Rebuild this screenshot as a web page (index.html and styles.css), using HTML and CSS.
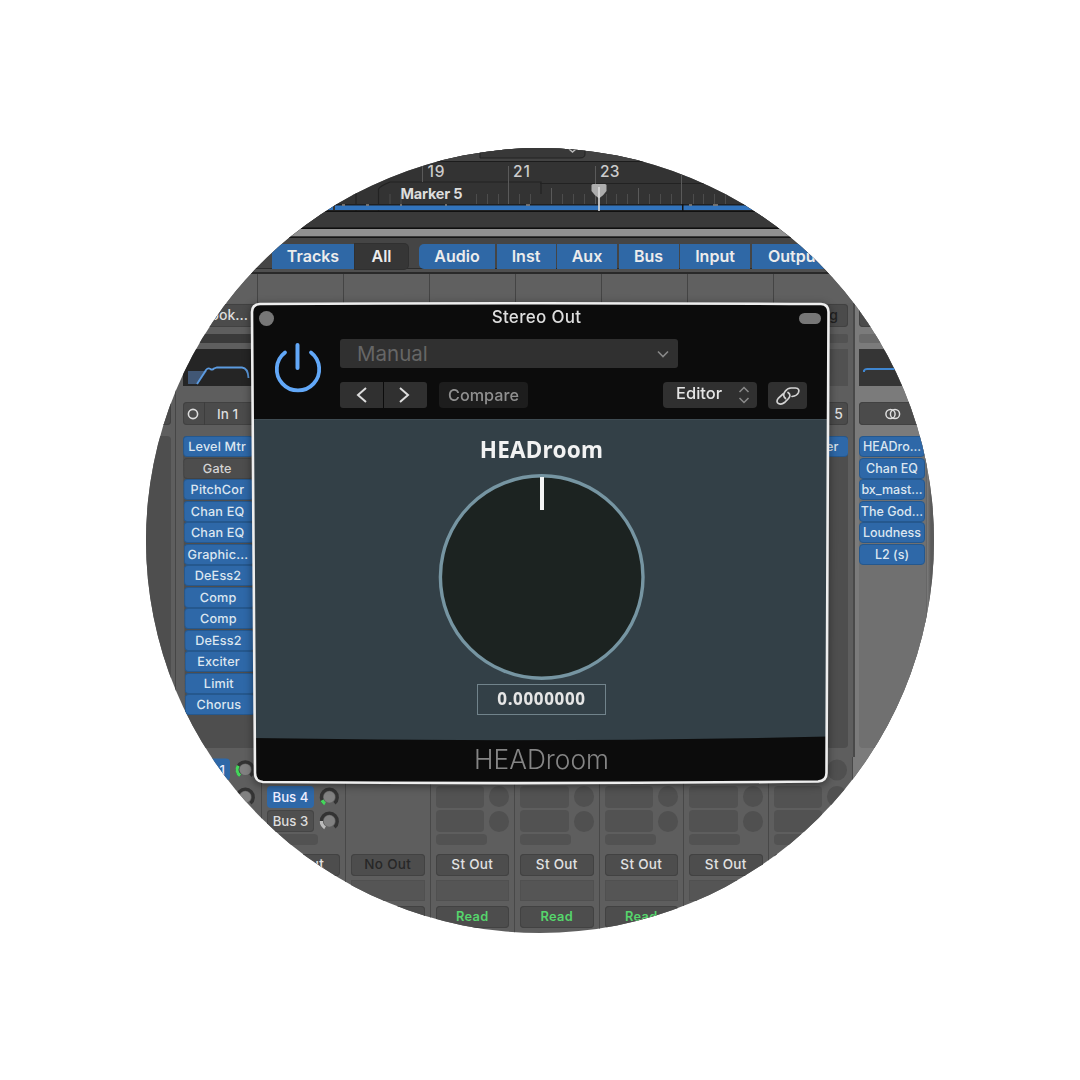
FILE: index.html
```html
<!DOCTYPE html>
<html lang="en">
<head>
<meta charset="utf-8">
<title>HEADroom</title>
<link rel="stylesheet" href="styles.css">
</head>
<body>
<main class="lens">
  <svg class="ruler" viewBox="146 148 788 90">
    <rect x="146" y="148" width="788" height="90" fill="#333"/>
    <path d="M146 148H934V161H146z" fill="#434343"/>
    <path d="M480 140H585V154Q585 158 580 158H480z" fill="#383838" stroke="#222"/>
    <path d="M569 149l3.500 3 3.500-3" fill="none" stroke="#bbb" stroke-width="1.500"/>
    <path d="M146 161.500H934" stroke="#1c1c1c"/>
    <path d="M540 183.500H934M356 190V213M378.500 213V189Q380 186 390 182H541V194" fill="none" stroke="#222" stroke-width="1.200"/>
    <path d="M422.500 166V182M508.500 166V204M595.500 166V204M681.500 170V204M551.500 188V204M638.500 188V204" stroke="#5a5a5a"/>
    <path d="M390 194V204M401 194V204M476.500 194V204M487.500 194V204M498.500 194V204M519.500 194V204M530.500 194V204M562.500 194V204M573.500 194V204M584.500 194V204M606.500 194V204M616.500 194V204M627.500 194V204M649.500 194V204M660.500 194V204M671.500 194V204M693.500 194V204M703.500 194V204M714.500 194V204M725.500 194V204" stroke="#4c4c4c"/>
    <rect x="146" y="204" width="788" height="2" fill="#202020"/>
    <rect x="335" y="205.500" width="600" height="4.500" fill="#3274bd"/>
    <rect x="146" y="205.500" width="187" height="4.500" fill="#3274bd"/>
    <rect x="682" y="204" width="1.500" height="8" fill="#151515"/>
    <path d="M342 205h3M366 205h3M400 205h2M445 205h2M526 205h4M689 205h3M713 205h5" stroke="#8a8580" stroke-width="1.500"/>
    <rect x="146" y="210.500" width="788" height="1.500" fill="#111"/>
    <rect x="146" y="212" width="788" height="15.500" fill="#393939"/>
    <rect x="146" y="227.500" width="788" height="1.500" fill="#0e0e0e"/>
    <rect x="146" y="229" width="788" height="7.500" fill="#909090"/>
    <rect x="146" y="236.500" width="788" height="1.500" fill="#151515"/>
    <path d="M591.500 185.500Q591.500 184 593 184H605Q606.500 184 606.500 185.500V191Q604 195 599 198.500Q594 195 591.500 191z" fill="#adadad"/>
    <path d="M599 187V211" stroke="#ddd" stroke-width="1.600"/>
    <text x="427.500" y="177" class="bar-no" textLength="17">19</text>
    <text x="513" y="177" class="bar-no" textLength="17">21</text>
    <text x="600" y="177" class="bar-no" textLength="19.500">23</text>
    <text x="686" y="177" class="bar-no" textLength="20">25</text>
    <text x="400.500" y="198.500" class="marker" textLength="62">Marker 5</text>
  </svg>

  <nav class="tabs">
    <span class="tab on tracks">Tracks</span><span class="tab all">All</span>
    <span class="tab on first audio">Audio</span><span class="tab on inst">Inst</span><span class="tab on aux">Aux</span><span class="tab on buses">Bus</span><span class="tab on input">Input</span><span class="tab on output">Output</span>
  </nav>

  <section class="headers"><i></i><i></i><i></i><i></i><i></i><i></i><i></i><i></i><i class="last"></i></section>

  <section class="strips">
    <div class="strip edge">
      <div class="btn name"></div><div class="slot"></div><div class="eq"></div><div class="btn io"></div>
      <div class="inserts"></div>
    </div>
    <div class="strip vocal">
      <div class="btn name">Book...</div>
      <div class="slot dark"></div>
      <svg class="eq black" viewBox="182 348 71 37"><path d="M187 370H206L197 383H187z" fill="#415775"/><path d="M196 383L205 369Q207 366.500 209.500 368Q211 369.500 213 367.500L216 366.500H241Q247 367 247.500 377" fill="none" stroke="#5c9be0" stroke-width="1.800"/></svg>
      <div class="btn io"><span class="ring"><svg width="12" height="12" viewBox="0 0 12 12"><circle cx="6" cy="6" r="4.600" fill="none" stroke="#ddd" stroke-width="1.600"/></svg></span><span class="in">In 1</span></div>
      <div class="inserts tilt">
        <b>Level Mtr</b><b class="off">Gate</b><b>PitchCor</b><b>Chan EQ</b><b>Chan EQ</b><b>Graphic...</b><b>DeEss2</b><b>Comp</b><b>Comp</b><b>DeEss2</b><b>Exciter</b><b>Limit</b><b>Chorus</b>
      </div>
    </div>
    <div class="behind"></div>
    <div class="strip right">
      <div class="btn name dim">g</div><div class="slot"></div><div class="eq"></div><div class="btn io">5</div>
      <div class="inserts"><b>er</b></div>
    </div>
    <div class="strip master">
      <div class="btn name"></div><div class="slot"></div>
      <svg class="eq" viewBox="859 348 80 37"><path d="M864 371V369.500Q865 368 867 368H940" fill="none" stroke="#3f86d0" stroke-width="2"/></svg>
      <div class="btn io"><svg width="18" height="12" viewBox="0 0 18 12" fill="none" stroke="#ddd" stroke-width="1.500"><circle cx="6.500" cy="6" r="4.600"/><circle cx="11" cy="6" r="4.600"/></svg></div>
      <div class="inserts"><b>HEADro...</b><b>Chan EQ</b><b>bx_mast...</b><b>The God...</b><b>Loudness</b><b>L2 (s)</b></div>
    </div>
  </section>

  <section class="sends">
    <div class="col stub"></div>
    <div class="col">
      <div class="send high"><span class="bus on end">1</span><svg class="knob" viewBox="-11 -11 22 22"><path d="M-5.500 6.700A8.500 8.500 0 1 1 5.500 6.700" class="track"/><path d="M-5.500 6.700A8.500 8.500 0 0 1 -7.600 -4" class="lit"/><circle r="6"/></svg></div>
      <div class="send"><span class="bus"></span><svg class="knob" viewBox="-11 -11 22 22"><path d="M-5.500 6.700A8.500 8.500 0 1 1 5.500 6.700" class="track"/><circle r="6"/></svg></div>
      <div class="send"><span class="bus"></span><span class="blank"></span></div>
      <div class="pill"></div><div class="out">St Out</div><div class="group"></div><div class="read">Read</div>
    </div>
    <div class="col">
      <div class="send"></div>
      <div class="send"><span class="bus on">Bus 4</span><svg class="knob" viewBox="-11 -11 22 22"><path d="M-5.500 6.700A8.500 8.500 0 1 1 5.500 6.700" class="track"/><path d="M-4.500 7.200A8.500 8.500 0 0 1 -7.800 3.500" class="lit"/><circle r="6"/></svg></div>
      <div class="send"><span class="bus plain">Bus 3</span><svg class="knob" viewBox="-11 -11 22 22"><path d="M-5.500 6.700A8.500 8.500 0 1 1 5.500 6.700" class="track"/><path d="M-4.500 7.200A8.500 8.500 0 0 1 -8.500 0" class="lit grey"/><circle r="6"/></svg></div>
      <div class="pill"></div><div class="out">St Out</div><div class="group"></div><div class="read">Read</div>
    </div>
    <div class="col">
      <div class="send"></div><div class="send"></div><div class="send"></div>
      <div class="pill none"></div><div class="out mute">No Out</div><div class="group"></div><div class="read"></div>
    </div>
    <div class="col">
      <div class="send"></div><div class="send"><span class="bus"></span><span class="blank"></span></div><div class="send"><span class="bus"></span><span class="blank"></span></div>
      <div class="pill"></div><div class="out">St Out</div><div class="group"></div><div class="read">Read</div>
    </div>
    <div class="col">
      <div class="send"></div><div class="send"><span class="bus"></span><span class="blank"></span></div><div class="send"><span class="bus"></span><span class="blank"></span></div>
      <div class="pill"></div><div class="out">St Out</div><div class="group"></div><div class="read">Read</div>
    </div>
    <div class="col">
      <div class="send"></div><div class="send"><span class="bus"></span><span class="blank"></span></div><div class="send"><span class="bus"></span><span class="blank"></span></div>
      <div class="pill"></div><div class="out">St Out</div><div class="group"></div><div class="read">Read</div>
    </div>
    <div class="col">
      <div class="send"></div><div class="send"><span class="bus"></span><span class="blank"></span></div><div class="send"><span class="bus"></span><span class="blank"></span></div>
      <div class="pill"></div><div class="out">St Out</div><div class="group"></div><div class="read">Read</div>
    </div>
    <div class="col">
      <div class="send high"><span class="bus"></span><span class="blank"></span></div><div class="send"><span class="bus"></span><span class="blank"></span></div><div class="send"><span class="bus"></span><span class="blank"></span></div>
      <div class="pill"></div><div class="out"></div><div class="group"></div><div class="read"></div>
    </div>
    <div class="col light"></div>
  </section>

  <section class="window">
    <svg class="frame" viewBox="250 300 582 486">
      <defs><clipPath id="shell"><path d="M260 304Q540 302.500 821 304Q828.500 304.500 828.500 312L826.500 773Q826.500 781 818 781.500Q540 784.500 263 782Q255 781.500 255 773L252 312Q252 304.500 260 304z"/></clipPath></defs>
      <g clip-path="url(#shell)">
        <path d="M250 300H832V786H250z" fill="#0c0c0c"/>
        <path d="M250 419H832V736.500Q541 743 250 738z" fill="#334047"/>
        <path d="M250 419.500H832" stroke="#3f4c53"/>
      </g>
      <path d="M260 304Q540 302.500 821 304Q828.500 304.500 828.500 312L826.500 773Q826.500 781 818 781.500Q540 784.500 263 782Q255 781.500 255 773L252 312Q252 304.500 260 304z" fill="none" stroke="#eee" stroke-width="2.600"/>
    </svg>
    <div class="face">
      <header class="titlebar"><span class="close"></span><span class="title">Stereo Out</span><span class="collapse"></span></header>
      <div class="controls">
        <svg class="power" viewBox="274 341 48 53" fill="none" stroke="#62a8f8" stroke-linecap="round"><path d="M285 352.500A21.200 21.200 0 1 0 311 352.500" stroke-width="3.800"/><path d="M297.500 345V368" stroke-width="4"/></svg>
        <div class="rows">
          <div class="preset"><span>Manual</span><svg width="12" height="8" viewBox="0 0 12 8" fill="none" stroke="#888" stroke-width="1.600"><path d="M1 1.500L6 6.500L11 1.500"/></svg></div>
          <div class="buttons">
            <span class="step prev"><svg width="12" height="18" viewBox="0 0 12 18"><path d="M10 2L2 9L10 16"/></svg></span><span class="step next"><svg width="12" height="18" viewBox="0 0 12 18"><path d="M2 2L10 9L2 16"/></svg></span>
            <span class="compare">Compare</span>
            <span class="editor"><span>Editor</span><svg width="12" height="18" viewBox="0 0 12 18" fill="none" stroke="#8a8a8a" stroke-width="1.500"><path d="M1.500 6L6 1.500L10.500 6M1.500 12L6 16.500L10.500 12"/></svg></span>
            <span class="link"><svg width="26" height="20" viewBox="775 386 26 20" fill="none" stroke="#d4d4d4" stroke-width="1.700" stroke-linecap="round"><path d="M783 394L778.500 398Q775.500 401.500 778.500 403.500Q781.500 405 784.500 402.500L788.500 398.500Q791.500 395 788 392.500"/><path d="M785.500 398.500Q782 395.500 785 391.500Q787.500 388 791 388H795.500Q800 388.500 798.500 392.500Q797 396 792 396.500"/></svg></span>
          </div>
        </div>
      </div>
      <div class="panel">
        <h1>HEADroom</h1>
        <svg class="dial" viewBox="438 474 207 207"><circle cx="541.700" cy="577" r="101.300" fill="#1c2321" stroke="#7695a2" stroke-width="3.400"/><path d="M542 477V510" stroke="#f4f4f4" stroke-width="4"/></svg>
        <div class="value">0.0000000</div>
      </div>
      <footer>HEADroom</footer>
    </div>
  </section>
</main>
</body>
</html>
```
FILE: styles.css
```css
* { box-sizing: border-box; }
body { margin: 0; width: 1080px; height: 1080px; background: #fff; padding: 148px 146px; overflow: hidden; font-family: Inter, "Liberation Sans", sans-serif; }
.lens { position: relative; width: 788px; height: 785px; border-radius: 50%; overflow: hidden; background: #5e5e5e; display: flex; flex-direction: column; }
.lens > * { flex: none; }
.ruler { display: block; width: 788px; height: 90px; }
.bar-no { font: 500 15.500px Inter, sans-serif; fill: #ccc; }
.marker { font: 700 14.500px Inter, sans-serif; fill: #ddd; }

.tabs { display: flex; height: 36px; padding: 6px 0 0 126px; background: #454545; border-bottom: 2px solid #292929; box-shadow: inset 0 -3px #4f4f4f, inset 0 -4px #2c2c2c; }
.tab { flex: none; height: 25px; line-height: 25px; text-align: center; font-size: 16px; font-weight: 600; color: #ececec; margin-right: 1.500px; }
.tab.on { background: #2f68a6; }
.tab.tracks { width: 82px; margin-right: 1px; }
.tab.all { width: 53px; background: #363636; border-radius: 0 4px 4px 0; margin-right: 11px; box-shadow: 0 0 0 1px #303030; }
.tab.first { border-radius: 5px 0 0 5px; }
.tab.audio { width: 76px; } .tab.inst { width: 59px; } .tab.aux { width: 60px; } .tab.buses { width: 60px; } .tab.input { width: 70px; }
.tab.output { width: 86px; }

.headers { display: flex; height: 29px; padding-left: 25.500px; background: #606060; }
.headers i { width: 86px; border-right: 1.500px solid #444; flex: none; }
.headers i:last-child { border: 0; }

.strips { display: flex; height: 454px; }
.strip { flex: none; display: flex; flex-direction: column; padding-top: 1px; }
.strip.edge { width: 30px; padding-right: 4px; border-right: 1.500px solid #464646; }
.strip.vocal { width: 84px; padding-left: 6.500px; }
.behind { width: 566px; flex: none; }
.strip.right { width: 29px; padding-right: 5px; background: #5e5e5e; border-right: 2px solid #494949; }
.strip.master { width: 79px; padding-left: 4px; background: linear-gradient(90deg, #7b7b7b 72px, #5a5a5a 76px); }
.btn { height: 23px; flex: none; background: #4b4b4b; border-radius: 4px; box-shadow: inset 0 0 0 1px #414141; color: #ddd; font-size: 14px; font-weight: 500; line-height: 22px; }
.name { text-align: right; padding-right: 12px; }
.right .name { padding-right: 10px; color: #222; }
.slot { height: 9px; margin: 7px 0 6px; background: #525252; border-radius: 2px; flex: none; }
.slot.dark { background: #3a3a3a; }
.master .slot { background: #6a6a6a; }
.eq { display: block; height: 37px; width: 100%; background: #515151; flex: none; }
.eq.black { background: #252525; width: 71px; }
.master .eq { background: #353535; width: 80px; }
.io { margin: 16px 0 10px; display: flex; align-items: center; }
.ring { width: 22px; display: flex; justify-content: center; height: 23px; align-items: center; border-right: 1px solid #3d3d3d; }
.in { width: 46px; text-align: center; font-size: 13.500px; }
.right .io { justify-content: center; font-size: 14px; padding-left: 3px; }
.master .io { padding-left: 25px; }
.inserts { height: 312px; background: #4e4e4e; border-radius: 4px; margin-top: 1px; }
.tilt { transform: skewX(.4deg); transform-origin: 0 0; }
.inserts b { display: block; height: 21px; margin-bottom: .5px; padding-right: 3px; width: 70px; background: #2e68a8; border: 1px solid #25588e; border-width: 1px 0 1px 1px; border-radius: 4px; color: #dce6f0; font-size: 12.700px; font-weight: 500; letter-spacing: .15px; line-height: 19px; text-align: center; white-space: nowrap; }
.inserts b.off { background: #4d4d4d; border-color: #434343; color: #d4d4d4; }
.right .inserts b { width: 22px; text-align: left; padding: 0; text-indent: -1px; }
.master .inserts { background: #707070; width: 67px; box-shadow: 1px 0 #666; }
.master .inserts b { width: 66px; border-width: 1px; padding: 0; letter-spacing: 0; font-size: 12.500px; }

.sends { display: flex; height: 176px; }
.col { flex: none; width: 84.500px; height: 176px; padding: 4px 5px 0 5px; border-right: 1.500px solid #484848; display: flex; flex-direction: column; }
.col.stub { width: 31px; }
.col.light { background: #7b7b7b; border: 0; }
.send { display: flex; align-items: center; gap: 5px; height: 22px; margin-bottom: 2.700px; flex: none; }
.send.high { transform: translateY(-2.500px); }
.bus { width: 51px; height: 22px; background: #525252; border-radius: 4px; text-align: center; font-size: 13.200px; font-weight: 500; line-height: 22px; color: #ddd; }
.bus.on { background: #2e68a8; color: #eef; }
.bus.end { text-align: right; padding-right: 5px; }
.bus.plain { background: #4f4f4f; box-shadow: inset 0 0 0 1px #454545; }
.blank { width: 21px; height: 21px; border-radius: 50%; background: #505050; }
.knob { width: 22px; height: 22px; fill: none; stroke-width: 3.500; }
.knob circle { fill: #818181; }
.track { stroke: #333; } .lit { stroke: #44d65b; } .lit.grey { stroke: #bbb; }
.pill { width: 51px; height: 11px; margin: -1px 0 8.500px; border-radius: 4px; background: #525252; flex: none; }
.pill.none { visibility: hidden; }
.out, .read { height: 22px; border-radius: 4px; background: #4d4d4d; box-shadow: inset 0 0 0 1px #424242; color: #e2e2e2; text-align: center; font-size: 13.500px; font-weight: 500; line-height: 21px; letter-spacing: .3px; flex: none; }
.out.mute { color: #272727; }
.group { height: 21px; margin: 4.500px 0; background: #555; box-shadow: inset 0 0 0 1px #505050; flex: none; }
.read { color: #56d66c; font-size: 12.800px; font-weight: 600; }

.window { position: absolute; left: 104px; top: 152px; width: 582px; height: 486px; filter: drop-shadow(0 2px 4px rgba(0,0,0,.45)); }
.frame { position: absolute; inset: 0; width: 582px; height: 486px; }
.face { position: relative; display: flex; flex-direction: column; height: 486px; }
.titlebar { display: flex; align-items: center; justify-content: space-between; height: 32px; padding: 4px 11px 0 9px; }
.close { width: 15px; height: 15px; border-radius: 50%; background: #777; }
.title { font-size: 17px; font-weight: 500; color: #dedede; letter-spacing: .3px; margin-top: -3px; }
.collapse { width: 22px; height: 11px; border-radius: 6px; background: #777; }
.controls { display: flex; height: 87px; padding: 7px 0 0 24px; }
.power { width: 48px; height: 53px; margin-top: 1.500px; flex: none; }
.rows { margin-left: 18px; width: 468px; }
.preset { width: 338px; height: 29px; margin-bottom: 14px; padding: 0 9px 0 17px; display: flex; align-items: center; justify-content: space-between; background: #303030; border-radius: 3px; color: #666; font-size: 20.500px; }
.buttons { display: flex; height: 26px; }
.step { width: 43px; display: flex; align-items: center; justify-content: center; background: #303030; border-radius: 3px 0 0 3px; margin-right: 1px; }
.step.next { border-radius: 0 3px 3px 0; margin-right: 12px; padding-right: 3px; }
.step svg { fill: none; stroke: #ddd; stroke-width: 2; }
.compare { width: 89px; background: #1d1d1d; border-radius: 4px; color: #909090; font-size: 16.200px; font-weight: 500; line-height: 26px; text-align: center; margin-right: 135px; }
.editor { width: 94px; padding: 0 7px 0 13px; display: flex; align-items: center; justify-content: space-between; background: #303030; border-radius: 4px; color: #e4e4e4; font-size: 16.500px; font-weight: 500; margin-right: 11px; }
.editor > span { margin-top: -4px; }
.link { width: 39px; display: flex; align-items: center; justify-content: center; background: #303030; border-radius: 4px; height: 27px; }
.panel { height: 319px; padding: 16px 0 0 1px; display: flex; flex-direction: column; align-items: center; }
h1 { margin: 0 0 9px; height: 30px; line-height: 30px; font-family: "Noto Sans", sans-serif; font-size: 22.500px; font-weight: 700; letter-spacing: .25px; color: #f2f2f2; }
.dial { width: 207px; height: 207px; flex: none; }
.value { width: 129px; height: 31px; margin-top: 3px; flex: none; border: 1.500px solid #71838b; font-family: "Noto Sans", sans-serif; font-size: 17px; font-weight: 700; letter-spacing: .65px; line-height: 28px; text-align: center; color: #e6e6e6; }
footer { height: 44px; line-height: 44px; text-align: center; padding-left: 1px; font-size: 26.300px; font-weight: 300; color: #858585; }
```
